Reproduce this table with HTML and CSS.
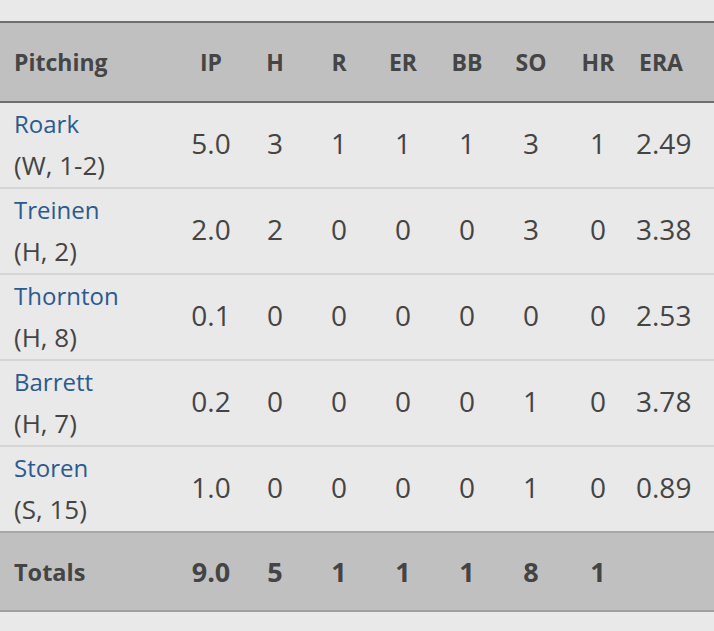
FILE: index.html
```html
<!DOCTYPE html>
<html>
<head>
<meta charset="utf-8">
<link rel="stylesheet" href="styles.css">
</head>
<body>
<div class="page">
<table class="box">
  <colgroup>
    <col class="c-name"><col class="c-num"><col class="c-num"><col class="c-num"><col class="c-num"><col class="c-num"><col class="c-num"><col class="c-hr"><col class="c-era">
  </colgroup>
  <thead>
    <tr class="head">
      <th class="name">Pitching</th><th>IP</th><th>H</th><th>R</th><th>ER</th><th>BB</th><th>SO</th><th>HR</th><th>ERA</th>
    </tr>
  </thead>
  <tbody>
    <tr class="row"><td class="name"><div class="player">Roark</div><div class="dec">(W, 1-2)</div></td><td>5.0</td><td>3</td><td>1</td><td>1</td><td>1</td><td>3</td><td>1</td><td>2.49</td></tr>
    <tr class="row"><td class="name"><div class="player">Treinen</div><div class="dec">(H, 2)</div></td><td>2.0</td><td>2</td><td>0</td><td>0</td><td>0</td><td>3</td><td>0</td><td>3.38</td></tr>
    <tr class="row"><td class="name"><div class="player">Thornton</div><div class="dec">(H, 8)</div></td><td>0.1</td><td>0</td><td>0</td><td>0</td><td>0</td><td>0</td><td>0</td><td>2.53</td></tr>
    <tr class="row"><td class="name"><div class="player">Barrett</div><div class="dec">(H, 7)</div></td><td>0.2</td><td>0</td><td>0</td><td>0</td><td>0</td><td>1</td><td>0</td><td>3.78</td></tr>
    <tr class="row last"><td class="name"><div class="player">Storen</div><div class="dec">(S, 15)</div></td><td>1.0</td><td>0</td><td>0</td><td>0</td><td>0</td><td>1</td><td>0</td><td>0.89</td></tr>
  </tbody>
  <tfoot>
    <tr class="foot">
      <td class="name">Totals</td><td>9.0</td><td>5</td><td>1</td><td>1</td><td>1</td><td>8</td><td>1</td><td></td>
    </tr>
  </tfoot>
</table>
</div>
</body>
</html>
```

FILE: styles.css
```css
html, body {
  margin: 0;
  padding: 0;
  background: #e9e9e9;
}
.page {
  padding-top: 21px;
  font-family: "Open Sans", "DejaVu Sans", sans-serif;
  color: #444;
}
.box {
  width: 714px;
  border-collapse: collapse;
  table-layout: fixed;
}
.c-name { width: 179px; }
.c-num { width: 64px; }
.c-hr { width: 70px; }
.c-era { width: 81px; }
.head th {
  height: 78px;
  padding: 0;
  background: #c0c0c0;
  border-top: 2px solid #6e6e6e;
  border-bottom: 2px solid #6e6e6e;
  font-size: 23px;
  font-weight: 700;
  text-align: center;
  color: #454545;
}
.head th:last-child { text-align: left; padding-left: 6px; }
th.name, td.name {
  text-align: left;
  padding-left: 14px;
}
.row td {
  height: 80px;
  padding: 0 0 4px 0;
  border-bottom: 2px solid #d4d4d4;
  font-size: 28px;
  text-align: center;
  color: #444;
  vertical-align: middle;
}
.row td:last-child { text-align: left; padding-left: 3px; }
.row td.name {
  padding: 0 0 0 14px;
  text-align: left;
}
.player {
  height: 42px;
  line-height: 42px;
  font-size: 24px;
  color: #2b5a91;
}
.dec {
  height: 42px;
  line-height: 40px;
  font-size: 26px;
  color: #444;
}
.row.last td { border-bottom: 2px solid #a8a8a8; }
.foot td {
  height: 77px;
  padding: 0;
  background: #c0c0c0;
  border-bottom: 2px solid #a0a0a0;
  font-size: 27px;
  font-weight: 700;
  text-align: center;
  color: #444;
}
.foot td.name {
  font-size: 23.5px;
  padding-left: 14px;
  text-align: left;
}
```
